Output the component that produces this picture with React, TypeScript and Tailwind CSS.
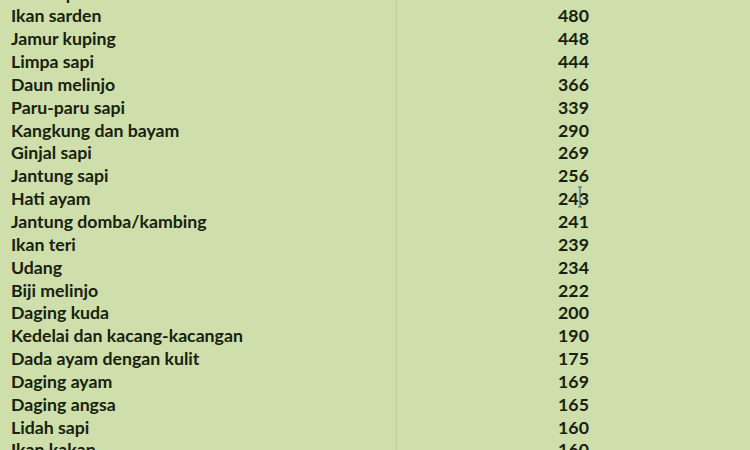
import React from 'react';

const rows: [string, string][] = [
  ['Hati sapi', '554'],
  ['Ikan sarden', '480'],
  ['Jamur kuping', '448'],
  ['Limpa sapi', '444'],
  ['Daun melinjo', '366'],
  ['Paru-paru sapi', '339'],
  ['Kangkung dan bayam', '290'],
  ['Ginjal sapi', '269'],
  ['Jantung sapi', '256'],
  ['Hati ayam', '243'],
  ['Jantung domba/kambing', '241'],
  ['Ikan teri', '239'],
  ['Udang', '234'],
  ['Biji melinjo', '222'],
  ['Daging kuda', '200'],
  ['Kedelai dan kacang-kacangan', '190'],
  ['Dada ayam dengan kulit', '175'],
  ['Daging ayam', '169'],
  ['Daging angsa', '165'],
  ['Lidah sapi', '160'],
  ['Ikan kakap', '160'],
];

const App: React.FC = () => {
  return (
    <div className="w-[750px] h-[450px] overflow-hidden bg-[#cedfab] text-[#17210f] font-['Lato',sans-serif] font-bold text-[17.7px]">
      <div className="-mt-[18px]">
        {rows.map(([name, value]) => (
          <div key={name} className="flex h-[22.85px] items-center leading-none">
            <div className="w-[397px] pl-[11px] border-r border-[#b9cd98] h-full flex items-center">{name}</div>
            <div className="flex-1 flex justify-center relative">
              {value}
              {name === 'Hati ayam' && (
                <svg className="absolute left-[180px] -top-[4px]" width="6" height="22" viewBox="0 0 6 22">
                  <path d="M1 1h4M3 1v20M1 21h4" stroke="#4a5a8a" strokeWidth="1.2" fill="none" />
                </svg>
              )}
            </div>
          </div>
        ))}
      </div>
    </div>
  );
};

export default App;
